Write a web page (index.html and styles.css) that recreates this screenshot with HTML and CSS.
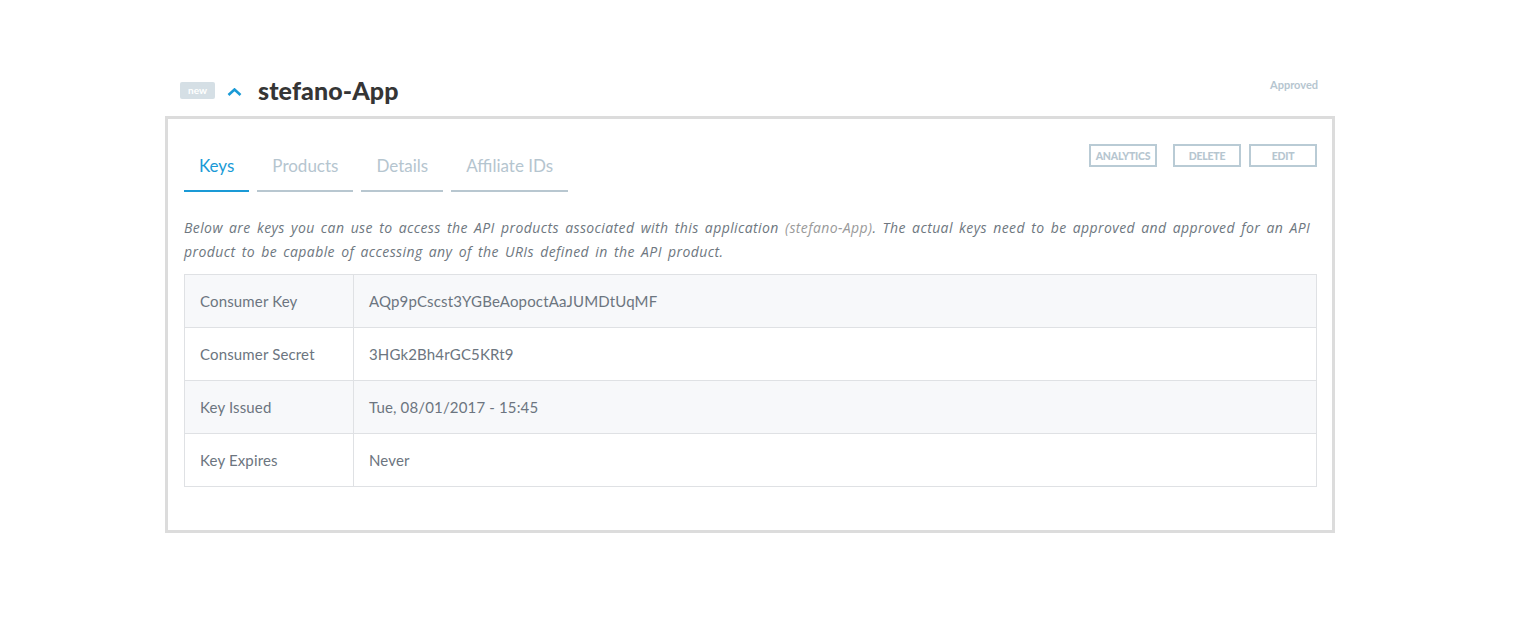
FILE: index.html
```html
<!DOCTYPE html>
<html>
<head>
<meta charset="utf-8">
<link rel="stylesheet" href="styles.css">
</head>
<body>
<div class="page">
  <div class="app-header">
    <div class="head-left">
      <span class="badge">new</span>
      <svg class="chevron" width="15" height="8" viewBox="0 0 15 8"><path d="M1.5 7 L7.5 1.5 L13.5 7" fill="none" stroke="#1a9ad6" stroke-width="2.6"/></svg>
      <h1 class="title">stefano-App</h1>
    </div>
    <span class="status">Approved</span>
  </div>
  <div class="panel">
    <div class="panel-top">
      <ul class="tabs">
        <li class="tab active">Keys</li>
        <li class="tab">Products</li>
        <li class="tab">Details</li>
        <li class="tab">Affiliate IDs</li>
      </ul>
      <div class="actions">
        <button class="btn btn-analytics">ANALYTICS</button>
        <button class="btn">DELETE</button>
        <button class="btn">EDIT</button>
      </div>
    </div>
    <p class="desc">Below are keys you can use to access the API products associated with this application <span class="muted">(stefano-App)</span>. The actual keys need to be approved and approved for an API product to be capable of accessing any of the URIs defined in the API product.</p>
    <table class="keys">
      <tr class="odd"><td class="label">Consumer Key</td><td>AQp9pCscst3YGBeAopoctAaJUMDtUqMF</td></tr>
      <tr><td class="label">Consumer Secret</td><td>3HGk2Bh4rGC5KRt9</td></tr>
      <tr class="odd"><td class="label">Key Issued</td><td>Tue, 08/01/2017 - 15:45</td></tr>
      <tr><td class="label">Key Expires</td><td>Never</td></tr>
    </table>
  </div>
</div>
</body>
</html>
```
FILE: styles.css
```css
* { box-sizing: border-box; }
html, body { margin: 0; padding: 0; background: #fff; }
body { font-family: Lato, "Open Sans", sans-serif; }
.page { width: 1170px; margin-left: 165px; padding-top: 72px; }
.app-header { display: flex; justify-content: space-between; align-items: flex-start; padding: 0 17px 0 15px; height: 44px; }
.head-left { display: flex; align-items: center; margin-top: 3px; }
.badge { display: inline-block; width: 35px; height: 17px; line-height: 17px; text-align: center; background: #d5dfe5; color: #fff; font-size: 10px; font-weight: 700; border-radius: 2px; }
.chevron { margin: 4px 0 0 12px; }
.title { margin: 0 0 0 16px; font-size: 25px; font-weight: 900; color: #353535; letter-spacing: 0.1px; }
.status { margin-top: 6px; font-size: 11px; font-weight: 700; color: #b6c6d0; }
.panel { border: 3px solid #dcdcdc; padding: 0 15px 43px 16px; }
.panel-top { display: flex; justify-content: space-between; align-items: flex-start; }
.tabs { list-style: none; margin: 0; padding: 0; display: flex; gap: 8px; margin-top: 36px; }
.tab { padding: 0 15px; height: 37px; font-size: 17px; color: #b5c5cf; border-bottom: 2px solid #b8c7d0; line-height: 22px; }
.tab.active { color: #1a9ad6; border-bottom-color: #1a9ad6; }
.actions { display: flex; gap: 8px; margin-top: 25px; }
.btn { height: 23px; padding: 0; border: 2px solid #b9cbd5; background: #fff; color: #b6c6d0; font-family: Lato, sans-serif; font-weight: 900; font-size: 10.5px; letter-spacing: -0.2px; width: 68px; }
.btn-analytics { margin-right: 8px; }
.desc { margin: 24px 0 10px; font-family: "Open Sans", Lato, sans-serif; font-size: 14px; font-style: italic; line-height: 24px; color: #6e7780; letter-spacing: 0.4px; word-spacing: 2.2px; }
.muted { color: #9a9a9a; }
.keys { width: 100%; border-collapse: collapse; font-size: 15px; color: #6c7580; letter-spacing: 0.15px; }
.keys td { border: 1px solid #dfe1e4; height: 53px; padding: 0 15px; }
.keys td.label { width: 169px; }
.keys tr.odd { background: #f7f8fa; }
```
